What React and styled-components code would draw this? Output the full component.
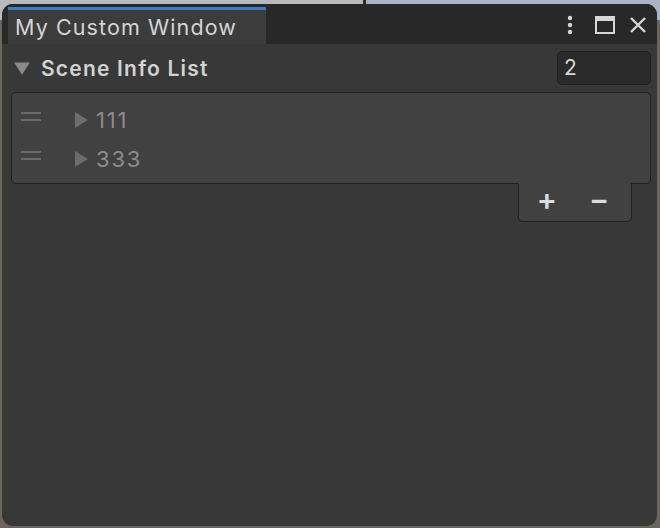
import React from 'react'
import styled, { createGlobalStyle } from 'styled-components'

const Global = createGlobalStyle`
  html, body { margin: 0; padding: 0; }
  body {
    width: 660px;
    height: 528px;
    overflow: hidden;
    background: linear-gradient(90deg, #b6babd 0, #b6babd 363px, #2a2a2a 363px, #2a2a2a 366px, #aab4c4 366px);
    font-family: Inter, "Noto Sans", sans-serif;
  }
`

const Desk = styled.div`
  width: 660px;
  height: 528px;
  padding: 4px 3px 2px 2px;
  box-sizing: border-box;
  background: linear-gradient(180deg, transparent 0, transparent 20px, #6a655f 20px);
`

const Window = styled.div`
  height: 100%;
  display: flex;
  flex-direction: column;
  background: #383838;
  border-radius: 11px;
  overflow: hidden;
`

const TabBar = styled.div`
  height: 40px;
  display: flex;
  align-items: stretch;
  background: #282828;
  flex-shrink: 0;
`

const Tab = styled.div`
  width: 258px;
  margin-left: 6px;
  margin-top: 3px;
  box-sizing: border-box;
  border-top: 3px solid #3c7dc4;
  background: #3c3c3c;
  color: #d4d4d4;
  font-size: 21.5px;
  padding: 4px 0 0 7px;
  letter-spacing: 1.1px;
`

const Spacer = styled.div`
  flex: 1;
`

const TabIcons = styled.div`
  display: flex;
  align-items: center;
  gap: 14px;
  padding-right: 10px;
  padding-top: 2px;
  color: #d6d6d6;
`

const Kebab = styled.svg`
  margin-right: 8px;
`

const Header = styled.div`
  display: flex;
  align-items: center;
  height: 46px;
  padding: 2px 6px 0 11px;
  box-sizing: border-box;
`

const Title = styled.div`
  flex: 1;
  display: flex;
  align-items: center;
  gap: 10px;
  font-weight: 600;
  font-size: 21px;
  letter-spacing: 1.2px;
  color: #d2d2d2;
`

const Field = styled.div`
  width: 94px;
  height: 34px;
  box-sizing: border-box;
  background: #2a2a2a;
  border: 1px solid #212121;
  border-radius: 5px;
  color: #d8d8d8;
  font-size: 21px;
  padding: 3px 0 0 6px;
`

const ListWrap = styled.div`
  display: flex;
  flex-direction: column;
  align-items: flex-end;
  padding: 2px 6px 0 9px;
`

const ListBox = styled.div`
  align-self: stretch;
  height: 92px;
  box-sizing: border-box;
  background: #414141;
  border: 1px solid #222;
  border-radius: 5px;
  padding: 8px 0 0 9px;
  display: flex;
  flex-direction: column;
  gap: 1px;
`

const Row = styled.div`
  height: 38px;
  display: flex;
  align-items: center;
  color: #8c8c8c;
  font-size: 22px;
  letter-spacing: 1.8px;
`

const Handle = styled.div`
  width: 20px;
  height: 9px;
  border-top: 2px solid #6a6a6a;
  border-bottom: 2px solid #6a6a6a;
  box-sizing: border-box;
  margin-right: 33px;
  margin-bottom: 8px;
`

const Label = styled.span`
  margin-left: 6px;
`

const Footer = styled.div`
  width: 114px;
  height: 39px;
  margin-top: -1px;
  margin-right: 19px;
  box-sizing: border-box;
  background: #414141;
  border: 1px solid #222;
  border-top: none;
  border-radius: 0 0 5px 5px;
  display: flex;
  align-items: center;
  justify-content: center;
  gap: 32px;
  color: #dcdcdc;
  font-size: 30px;
  font-weight: 600;
  padding-bottom: 6px;
  padding-right: 4px;
`

const Tri = ({ dir, color, size = 16 }) => (
  <svg width={size} height={size} viewBox="0 0 16 16">
    {dir === 'down'
      ? <polygon points="1,3 15,3 8,14" fill={color} />
      : <polygon points="1,0 14,8 1,16" fill={color} />}
  </svg>
)

const Item = ({ label }) => (
  <Row>
    <Handle />
    <Tri dir="right" color="#6c6c6c" size={16} />
    <Label>{label}</Label>
  </Row>
)

export default function App() {
  return (
    <>
      <Global />
      <Desk>
        <Window>
          <TabBar>
            <Tab>My Custom Window</Tab>
            <Spacer />
            <TabIcons>
              <Kebab width="6" height="20" viewBox="0 0 6 20">
                <circle cx="3" cy="3" r="2.2" fill="#d6d6d6" />
                <circle cx="3" cy="10" r="2.2" fill="#d6d6d6" />
                <circle cx="3" cy="17" r="2.2" fill="#d6d6d6" />
              </Kebab>
              <svg width="20" height="18" viewBox="0 0 20 18">
                <rect x="1" y="1" width="18" height="16" fill="none" stroke="#d6d6d6" strokeWidth="2" />
                <rect x="1" y="1" width="18" height="4" fill="#d6d6d6" />
              </svg>
              <svg width="18" height="18" viewBox="0 0 18 18">
                <path d="M2 2 L16 16 M16 2 L2 16" stroke="#d6d6d6" strokeWidth="2.4" />
              </svg>
            </TabIcons>
          </TabBar>
          <Header>
            <Title>
              <Tri dir="down" color="#8a8a8a" size={18} />
              Scene Info List
            </Title>
            <Field>2</Field>
          </Header>
          <ListWrap>
            <ListBox>
              <Item label="111" />
              <Item label="333" />
            </ListBox>
            <Footer>
              <span>+</span>
              <span>−</span>
            </Footer>
          </ListWrap>
        </Window>
      </Desk>
    </>
  )
}
